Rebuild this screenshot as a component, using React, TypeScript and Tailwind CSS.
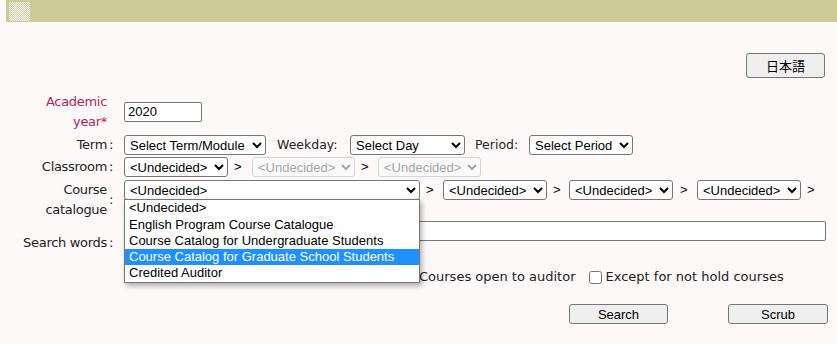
import React from 'react';

const ctl = "font-['Liberation_Sans',Arial,sans-serif] text-[13px] tracking-normal text-black";
const sel = `${ctl} h-[20px] border border-[#767676] rounded-[3px] bg-white pl-[1px]`;
const off = "font-['Liberation_Sans',Arial,sans-serif] text-[13px] tracking-normal text-[#a6a6a6] h-[20px] border border-[#d4d4d4] rounded-[3px] bg-[#fafafa] pl-[1px]";
const btn = `${ctl} h-[20px] border border-[#767676] rounded-[3px] bg-[#efefef]`;

const catalogues = [
  { t: '<Undecided>', h: 'h-[17px]' },
  { t: 'English Program Course Catalogue', h: 'h-[16px]' },
  { t: 'Course Catalog for Undergraduate Students', h: 'h-[16px]' },
  { t: 'Course Catalog for Graduate School Students', h: 'h-[16px]', on: true },
  { t: 'Credited Auditor', h: 'h-[17px]' },
];

function Row({
  label,
  colon = true,
  red = false,
  className = '',
  children,
}: {
  label: React.ReactNode;
  colon?: boolean;
  red?: boolean;
  className?: string;
  children?: React.ReactNode;
}) {
  return (
    <div className={`flex items-center ${className}`}>
      <div className={`w-[93px] text-right leading-[20px] text-[13px] tracking-[-0.3px] ${red ? 'text-[#b4245c]' : ''}`}>{label}</div>
      <div className="w-[17px] pl-[2px] text-[13px]">{colon ? ':' : ''}</div>
      <div className="flex-1 min-w-0 self-stretch flex flex-col justify-center">{children}</div>
    </div>
  );
}

function Gt({ className = '' }: { className?: string }) {
  return <span className={`${ctl} w-[8px] ${className}`}>&gt;</span>;
}

export default function App() {
  return (
    <div className="relative w-[837px] min-h-[344px] bg-[#fdf9f8] font-['DejaVu_Sans',Verdana,sans-serif] text-[12px] text-[#222]">
      {/* top bar */}
      <div className="ml-[6px] h-[22px] bg-[#cdcb97] pl-[3px] pt-[2px]">
        <div className="w-[21px] h-[19px] bg-[repeating-conic-gradient(#ffffff_0_25%,#cdcb97_0_50%)] bg-[length:2px_2px]" />
      </div>

      <div className="flex justify-end pr-[12px] pt-[31px]">
        <button className="w-[79px] h-[25px] border border-[#767676] rounded-[3px] bg-[#efefef] text-[13px] text-black font-['Noto_Sans_CJK_JP',sans-serif]">
          日本語
        </button>
      </div>

      <div className="mt-[14px] pl-[14px] pr-[11px]">
        <Row label="Academic year*" red colon={false} className="h-[39px]">
          <input
            defaultValue="2020"
            className={`${ctl} w-[78px] h-[20px] border border-[#767676] rounded-[2px] bg-white px-[3px]`}
          />
        </Row>

        <Row label="Term" className="mt-[3px] h-[22px]">
          <div className="flex items-center text-[12.5px]">
            <select className={`${sel} w-[142px]`}>
              <option>Select Term/Module</option>
            </select>
            <span className="ml-[11px] w-[73px]">Weekday:</span>
            <select className={`${sel} w-[115px]`}>
              <option>Select Day</option>
            </select>
            <span className="ml-[10px] w-[54px]">Period:</span>
            <select className={`${sel} w-[104px]`}>
              <option>Select Period</option>
            </select>
          </div>
        </Row>

        <Row label="Classroom" className="h-[22px]">
          <div className="flex items-center">
            <select className={`${sel} w-[104px]`}>
              <option>&lt;Undecided&gt;</option>
            </select>
            <Gt className="ml-[6px] mr-[10px]" />
            <select disabled className={`${off} w-[103px]`}>
              <option>&lt;Undecided&gt;</option>
            </select>
            <Gt className="ml-[6px] mr-[9px]" />
            <select disabled className={`${off} w-[103px]`}>
              <option>&lt;Undecided&gt;</option>
            </select>
          </div>
        </Row>

        <Row label="Course catalogue" className="h-[43px]">
          <div className="flex flex-col justify-start h-full pt-[2px]">
            <div className="flex items-center">
              <select className={`${sel} w-[296px]`}>
                <option>&lt;Undecided&gt;</option>
              </select>
              <Gt className="ml-[6px] mr-[9px]" />
              <select className={`${sel} w-[104px]`}>
                <option>&lt;Undecided&gt;</option>
              </select>
              <Gt className="ml-[6px] mr-[8px]" />
              <select className={`${sel} w-[104px]`}>
                <option>&lt;Undecided&gt;</option>
              </select>
              <Gt className="ml-[7px] mr-[9px]" />
              <select className={`${sel} w-[104px]`}>
                <option>&lt;Undecided&gt;</option>
              </select>
              <Gt className="ml-[6px]" />
            </div>
          </div>
        </Row>

        <Row label="Search words" className="h-[44px]">
          <div className="flex flex-col justify-start h-full">
            <input className={`${ctl} w-full h-[20px] border border-[#767676] rounded-[2px] bg-white px-[3px]`} />
          </div>
        </Row>

        <Row label="" colon={false} className="mt-[1px] h-[22px]">
          <div className="flex items-center text-[13px]">
            <div className="w-[295px]" />
            <span>Courses open to auditor</span>
            <input type="checkbox" className="m-0 ml-[13px] mr-[4px] w-[13px] h-[13px]" />
            <span>Except for not hold courses</span>
          </div>
        </Row>
      </div>

      <div className="mt-[16px] flex justify-end pr-[9px] gap-[60px]">
        <button className={`${btn} w-[99px]`}>Search</button>
        <button className={`${btn} w-[100px]`}>Scrub</button>
      </div>

      {/* open dropdown of the course catalogue select */}
      <div className="absolute z-10 left-[124px] top-[199px] w-[296px] border border-[#767676] bg-white shadow-[2px_3px_5px_rgba(0,0,0,0.3)]">
        {catalogues.map(c => (
          <div
            key={c.t}
            className={`${ctl} ${c.h} leading-[16px] pl-[4px] ${c.on ? 'bg-[#1e90ff] text-white' : ''}`}
          >
            {c.t}
          </div>
        ))}
      </div>
    </div>
  );
}
